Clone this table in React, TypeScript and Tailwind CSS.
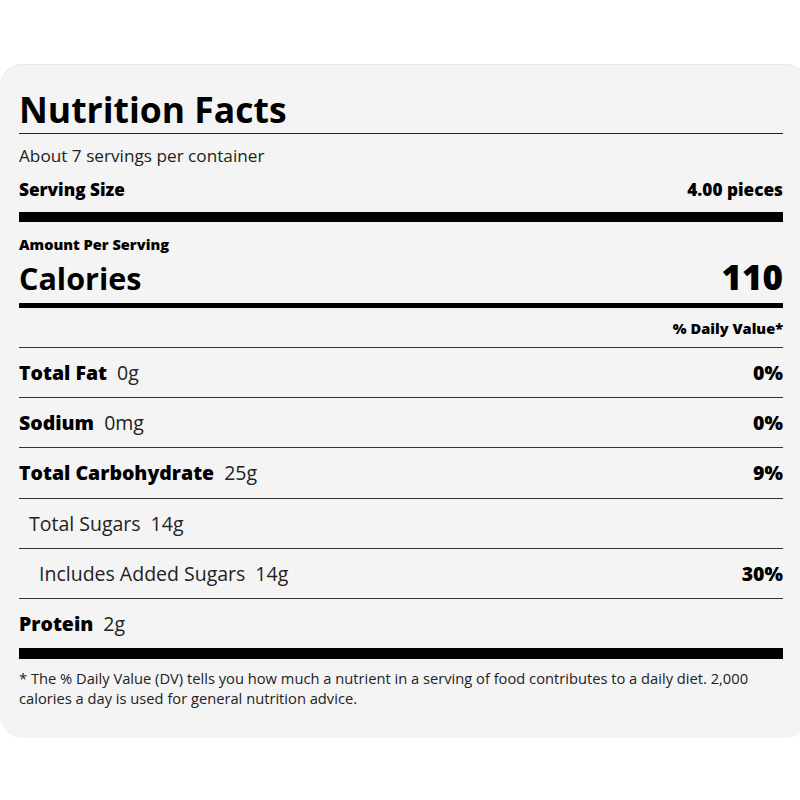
const rows = [
  { name: "Total Fat", amount: "0g", dv: "0%", indent: "" },
  { name: "Sodium", amount: "0mg", dv: "0%", indent: "" },
  { name: "Total Carbohydrate", amount: "25g", dv: "9%", indent: "" },
  { name: "Total Sugars", amount: "14g", dv: "", indent: "pl-[10px]", light: true },
  { name: "Includes Added Sugars", amount: "14g", dv: "30%", indent: "pl-[20px]", light: true },
];

export default function App() {
  return (
    <div className="min-h-[800px] overflow-hidden bg-white pt-[64px] font-['Open_Sans',sans-serif] text-[#222]">
      {/* Label card */}
      <div className="mr-[-8px] rounded-[22px] border-t border-[#e6e6e6] bg-[#f4f4f4] pl-[19px] pr-[25px] pt-[24px] pb-[30px]">
        <h1 className="border-b border-[#222] pb-[4px] text-[35.5px] font-bold leading-[40px] text-black">
          Nutrition Facts
        </h1>
        <p className="mt-[12px] text-[17.2px] leading-[20px]">About 7 servings per container</p>
        <div className="mt-[14px] flex justify-between text-[17.2px] font-extrabold leading-[20px] text-black">
          <span>Serving Size</span>
          <span>4.00 pieces</span>
        </div>
        <div className="mt-[12px] h-[10px] bg-black" />

        {/* Calories */}
        <p className="mt-[13px] text-[14.6px] font-extrabold leading-[18px] text-black">Amount Per Serving</p>
        <div className="mt-[6px] flex items-baseline justify-between text-black">
          <span className="text-[30.5px] font-bold leading-[36px]">Calories</span>
          <span className="text-[35px] font-extrabold leading-[36px]">110</span>
        </div>
        <div className="mt-[7px] h-[5px] bg-black" />
        <p className="mt-[11px] border-b border-[#333] pb-[10px] text-right text-[14.6px] font-extrabold leading-[18px] text-black">
          % Daily Value*
        </p>

        {/* Nutrients */}
        {rows.map((r) => (
          <div
            key={r.name}
            className={`flex justify-between border-b border-[#333] py-3 text-[19.5px] leading-[25.2px] ${r.indent}`}
          >
            <span>
              <span className={r.light ? "" : "font-extrabold text-black"}>{r.name}</span>
              <span className="ml-[10px]">{r.amount}</span>
            </span>
            <span className="font-extrabold text-black">{r.dv}</span>
          </div>
        ))}
        <div className="flex py-3 text-[19.5px] leading-[25px]">
          <span className="font-extrabold text-black">Protein</span>
          <span className="ml-[10px]">2g</span>
        </div>
        <div className="h-[11px] bg-black" />
        <p className="mt-[9px] text-[14.7px] leading-[20px]">
          * The % Daily Value (DV) tells you how much a nutrient in a serving of food contributes to a daily diet. 2,000
          calories a day is used for general nutrition advice.
        </p>
      </div>
    </div>
  );
}
